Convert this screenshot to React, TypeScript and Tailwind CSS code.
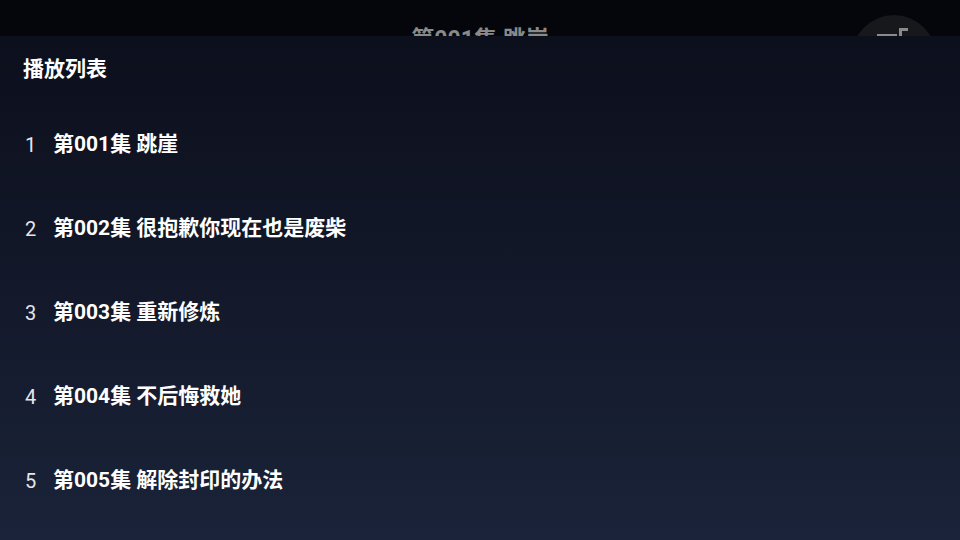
const episodes = [
  { no: 1, title: '第001集 跳崖' },
  { no: 2, title: '第002集 很抱歉你现在也是废柴' },
  { no: 3, title: '第003集 重新修炼' },
  { no: 4, title: '第004集 不后悔救她' },
  { no: 5, title: '第005集 解除封印的办法' },
];

const font = { fontFamily: 'Roboto, "Noto Sans CJK SC", sans-serif' };

export default function App() {
  return (
    <div className="relative w-[960px] h-[540px] overflow-hidden bg-[#05060b]" style={font}>
      {/* player top bar, mostly hidden under the playlist panel */}
      <div className="flex items-start h-[100px] pt-[15px] pl-[108px] pr-[24px]">
        <div className="flex-1 text-center pt-[9px] text-[23px] leading-[32px] font-bold text-[#8a8a8a]">
          第001集 跳崖
        </div>
        <div className="w-[84px] h-[84px] rounded-full bg-[#17181c] flex items-start justify-center pt-[13px]">
          <svg width="34" height="10" viewBox="0 0 34 10" fill="none">
            <rect x="0" y="6" width="20" height="2" fill="#8a8a8a" />
            <rect x="22" y="0" width="3" height="8" fill="#8a8a8a" />
            <rect x="22" y="0" width="9" height="3" fill="#8a8a8a" />
          </svg>
        </div>
      </div>

      {/* playlist overlay */}
      <div className="absolute inset-x-0 top-[36px] bottom-0 bg-gradient-to-b from-[#0c0f1c] to-[#1a2339]">
        <div className="pl-[23px] pt-[19px] text-[21px] leading-[28px] font-bold text-white">播放列表</div>
        <div className="mt-[20px] flex flex-col">
          {episodes.map((ep) => (
            <div key={ep.no} className="h-[84px] flex items-center pl-[25px]">
              <span className="w-[28px] text-[20px] text-[#e4e6ea]">{ep.no}</span>
              <span className="text-[21px] font-bold text-white">{ep.title}</span>
            </div>
          ))}
        </div>
      </div>
    </div>
  );
}
